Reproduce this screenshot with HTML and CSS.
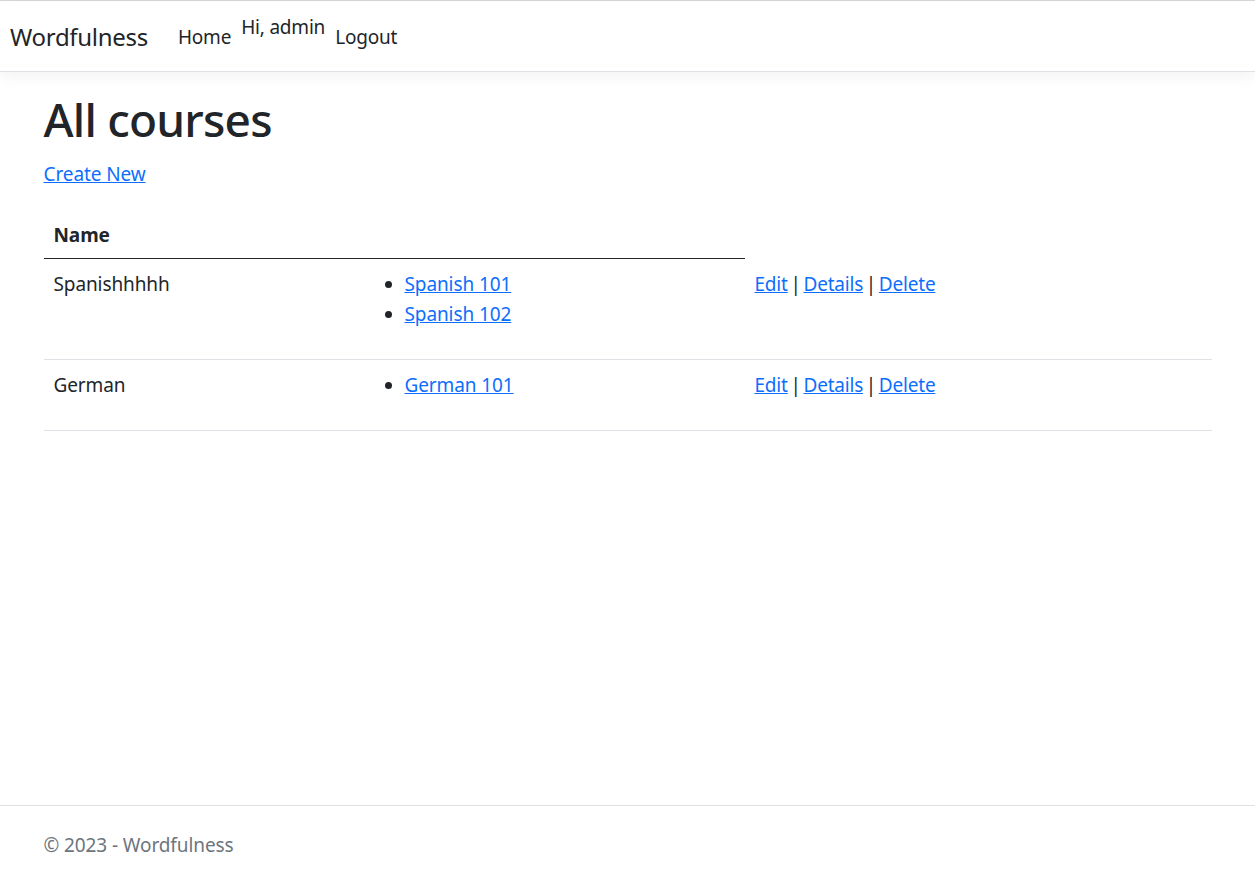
FILE: index.html
```html
<!DOCTYPE html>
<html lang="en">
<head>
<meta charset="utf-8">
<title>All courses - Wordfulness</title>
<link rel="stylesheet" href="styles.css">
</head>
<body>
<header class="site-header">
  <nav class="navbar">
    <a class="brand" href="#">Wordfulness</a>
    <ul class="nav-main">
      <li><a class="nav-link" href="#">Home</a></li>
    </ul>
    <ul class="nav-user">
      <li class="greeting">Hi, admin</li>
      <li><a class="nav-link" href="#">Logout</a></li>
    </ul>
  </nav>
</header>
<main class="container main">
  <h1 class="page-title">All courses</h1>
  <p class="create"><a href="#">Create New</a></p>
  <table class="table">
    <thead>
      <tr>
        <th class="col-name">Name</th>
        <th class="col-lessons"></th>
      </tr>
    </thead>
    <tbody>
      <tr>
        <td>Spanishhhhh</td>
        <td>
          <ul class="lessons">
            <li><a href="#">Spanish 101</a></li>
            <li><a href="#">Spanish 102</a></li>
          </ul>
        </td>
        <td class="actions"><a href="#">Edit</a> | <a href="#">Details</a> | <a href="#">Delete</a></td>
      </tr>
      <tr>
        <td>German</td>
        <td>
          <ul class="lessons">
            <li><a href="#">German 101</a></li>
          </ul>
        </td>
        <td class="actions"><a href="#">Edit</a> | <a href="#">Details</a> | <a href="#">Delete</a></td>
      </tr>
    </tbody>
  </table>
</main>
<footer class="footer">
  <div class="container">&copy; 2023 - Wordfulness</div>
</footer>
</body>
</html>
```

FILE: styles.css
```css
* { box-sizing: border-box; }

html, body { height: 100%; }

body {
  margin: 0;
  font-family: "Noto Sans", "Open Sans", sans-serif;
  font-size: 19px;
  line-height: 30px;
  letter-spacing: -0.1px;
  color: #212529;
  background: #fff;
  display: flex;
  flex-direction: column;
}

a { color: #0d6efd; }

.site-header {
  border-top: 1px solid #d6d6d6;
}

.navbar {
  height: 71px;
  padding: 2px 10px 0;
  display: flex;
  align-items: center;
  border-bottom: 1px solid #dee2e6;
  box-shadow: 0 5px 15px rgba(0, 0, 0, 0.05);
  background: #fff;
}

.brand {
  font-size: 24px;
  letter-spacing: -0.3px;
  color: #212529;
  text-decoration: none;
  margin-right: 20px;
  line-height: 36px;
}

.nav-main, .nav-user {
  list-style: none;
  margin: 0;
  padding: 0;
  display: flex;
}

.nav-user { align-items: flex-start; }

.greeting { line-height: 30px; letter-spacing: -0.2px; }

.nav-link {
  display: block;
  padding: 10px;
  line-height: 30px;
  letter-spacing: -0.2px;
  color: #212529;
  text-decoration: none;
}

.container {
  width: 1200px;
  max-width: 100%;
  margin: 0 auto;
  padding: 0 16px;
}

.main {
  flex: 1 0 auto;
  padding-top: 17px;
}

.page-title {
  margin: 0 0 10px;
  font-size: 46px;
  font-weight: 500;
  letter-spacing: -0.8px;
  line-height: 60px;
}

.create {
  margin: 0 0 19px;
}

.table {
  width: 100%;
  border-collapse: collapse;
}

.table th, .table td {
  padding: 10px;
  text-align: left;
  vertical-align: top;
}

.table th {
  font-weight: 700;
  border-bottom: 1px solid #212529;
  padding-top: 12px;
  padding-bottom: 8px;
}

.table td {
  border-bottom: 1px solid #dee2e6;
}

.actions { word-spacing: -2px; letter-spacing: -0.2px; }

.col-name { width: 311px; }
.col-lessons { width: 390px; }

.lessons {
  margin: 0 0 20px;
  padding-left: 40px;
}

.footer {
  flex-shrink: 0;
  border-top: 1px solid #dee2e6;
  height: 65px;
  padding-top: 24px;
  line-height: 30px;
  color: #6c757d;
  white-space: nowrap;
}
```
